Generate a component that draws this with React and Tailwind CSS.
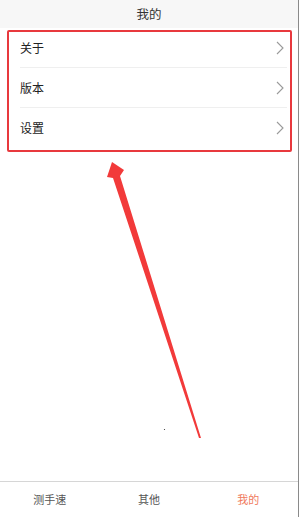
import React from 'react';

const rows = ['关于', '版本', '设置'];
const tabs = [
  { label: '测手速', active: false },
  { label: '其他', active: false },
  { label: '我的', active: true },
];

function Chevron() {
  return (
    <svg width="8" height="14" viewBox="0 0 8 14" fill="none">
      <path d="M1 1l6 6-6 6" stroke="#9a9a9a" strokeWidth="1.1" />
    </svg>
  );
}

export default function App() {
  return (
    <div
      className="relative w-[300px] h-[517px] bg-white overflow-hidden"
      style={{ fontFamily: '"Noto Sans CJK SC", "Noto Sans", sans-serif' }}
    >
      <div className="w-[299px] h-full border-r border-[#8a8a8a] flex flex-col">
        {/* header */}
        <div className="h-[28px] bg-[#f7f7f7] flex items-center justify-center text-[12.5px] text-[#333]">
          我的
        </div>

        {/* menu list */}
        <div>
          {rows.map((r, i) => (
            <div key={r} className="pl-[20px] pr-[11px]">
              <div
                className={`h-[40px] flex items-center justify-between pr-[3px] ${
                  i < rows.length - 1 ? 'border-b border-[#efefef]' : ''
                }`}
              >
                <span className="text-[12px] text-[#222]">{r}</span>
                <Chevron />
              </div>
            </div>
          ))}
        </div>

        <div className="flex-1" />

        {/* tab bar */}
        <div className="h-[36px] border-t border-[#d6d6d6] grid grid-cols-3">
          {tabs.map((t) => (
            <div
              key={t.label}
              className={`flex items-center justify-center text-[11px] ${
                t.active ? 'text-[#f07a5c]' : 'text-[#555]'
              }`}
            >
              {t.label}
            </div>
          ))}
        </div>
      </div>

      {/* annotation: red box */}
      <div className="absolute left-[7px] top-[30px] w-[285px] h-[122px] border-2 border-[#e8393e] rounded-[2px] pointer-events-none" />

      {/* annotation: arrow */}
      <svg className="absolute left-0 top-0 pointer-events-none" width="300" height="517" viewBox="0 0 300 517">
        <polygon
          points="112,162 124,170 120,176 201,438 199,438 113,178 107,177"
          fill="#f23a3a"
        />
        <circle cx="164.5" cy="429.5" r="0.6" fill="#333" />
      </svg>
    </div>
  );
}
